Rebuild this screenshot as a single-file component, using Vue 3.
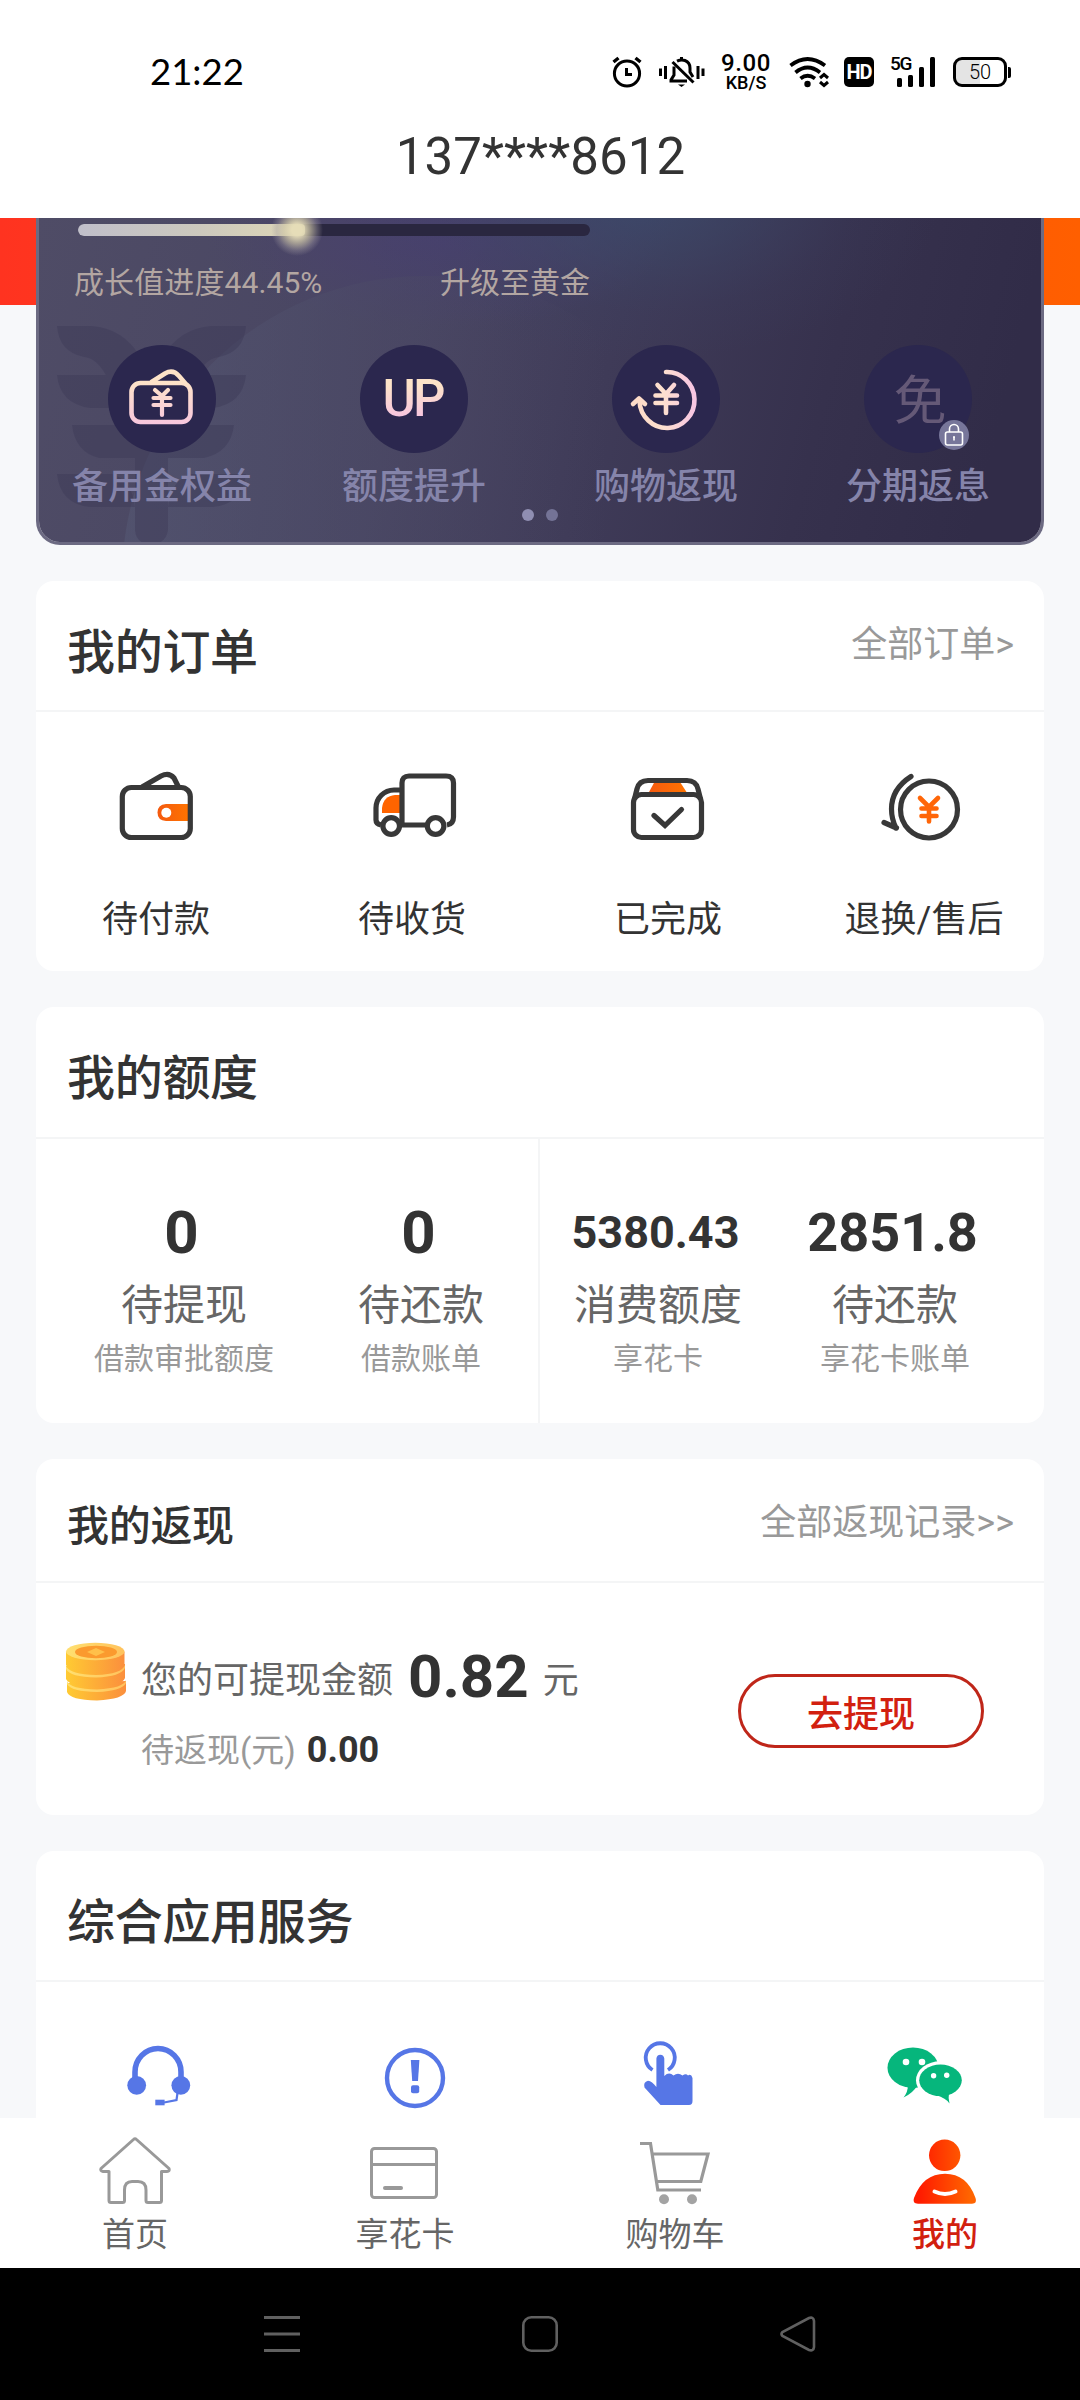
<script setup>
const perks = ['备用金权益', '额度提升', '购物返现', '分期返息']
const orderLabels = ['待付款', '待收货', '已完成', '退换/售后']
const quotas = [
  { value: '0', size: 'lg', label: '待提现', note: '借款审批额度' },
  { value: '0', size: 'lg', label: '待还款', note: '借款账单' },
  { value: '5380.43', size: 'sm', label: '消费额度', note: '享花卡' },
  { value: '2851.8', size: 'md', label: '待还款', note: '享花卡账单' },
]
const tabs = ['首页', '享花卡', '购物车', '我的']
</script>

<template>
  <div class="screen">
    <header class="header">
      <div class="status">
        <span class="clock">21:22</span>
        <div class="status-icons">
          <svg width="30" height="32" viewBox="0 0 30 32" fill="none" stroke="#000" stroke-width="3">
            <circle cx="15" cy="17.5" r="12.6" />
            <path d="M14.5 12V18.5H20" />
            <path d="M1.5 6L6.5 2M28.5 6L23.5 2" stroke-width="3.4" />
          </svg>
          <svg class="bell" width="46" height="32" viewBox="0 0 46 32" fill="none" stroke="#000" stroke-width="3">
            <path d="M1.500 12.500V20M6.500 10V23M39 10V23M44 12.500V20" />
            <path d="M22.500 1V4M15 10.500V19L12 24V25H28M18 5.200Q22 3.200 26 4.500Q31 6.500 31 12V16L34 21" />
            <path d="M13.500 6L34.500 26.500" />
            <path d="M19 28.500H26L22.500 31Z" fill="#000" stroke="none" />
          </svg>
          <div class="speed"><b>9.00</b><i>KB/S</i></div>
          <svg class="wifi" width="40" height="32" viewBox="0 0 40 32" fill="none" stroke="#000" stroke-width="3.800">
            <path d="M1.500 9.500Q18.500 -3.500 36 9.500M6.500 16.500Q18.500 6.500 31 16.500M11.500 22.500Q18.500 17 26 22.500" />
            <circle cx="18.500" cy="28" r="3.200" fill="#000" stroke="none" />
            <path d="M31 22L35 18.500L39 22M31 26L35 29.500L39 26" stroke-width="3" />
          </svg>
          <span class="hd">HD</span>
          <div class="signal">
            <span class="net">5G</span>
            <svg width="44" height="32" viewBox="0 0 44 32" fill="#000">
              <rect x="6" y="22" width="5" height="9" rx="1.500" />
              <rect x="17" y="19" width="5" height="12" rx="1.500" />
              <rect x="28" y="11" width="5" height="20" rx="1.500" />
              <rect x="39" y="1" width="5" height="30" rx="1.500" />
            </svg>
          </div>
          <div class="battery"><span>50</span></div>
        </div>
      </div>
      <h1>137****8612</h1>
    </header>

    <main class="content">
      <section class="hero">
        <div class="vip">
          <svg class="vip-art" viewBox="39 218 1002 324" preserveAspectRatio="none">
            <defs>
              <linearGradient id="vipBase" x1="0" y1="0" x2="1" y2="0.08">
                <stop offset="0" stop-color="#4f4c66" />
                <stop offset="0.4" stop-color="#484562" />
                <stop offset="0.6" stop-color="#3f3b58" />
                <stop offset="0.82" stop-color="#36314d" />
                <stop offset="1" stop-color="#312c48" />
              </linearGradient>
              <radialGradient id="vipBlue" gradientUnits="userSpaceOnUse" cx="0" cy="0" r="1" gradientTransform="translate(640 200) scale(300 160)">
                <stop offset="0" stop-color="#3c4a6c" stop-opacity="0.85" />
                <stop offset="0.35" stop-color="#3c4869" stop-opacity="0.5" />
                <stop offset="0.7" stop-color="#3c4265" stop-opacity="0.16" />
                <stop offset="1" stop-color="#3c4265" stop-opacity="0" />
              </radialGradient>
              <radialGradient id="vipPurple" gradientUnits="userSpaceOnUse" cx="0" cy="0" r="1" gradientTransform="translate(440 235) scale(230 95)">
                <stop offset="0" stop-color="#49406f" stop-opacity="0.9" />
                <stop offset="1" stop-color="#49406f" stop-opacity="0" />
              </radialGradient>
              <linearGradient id="vipDisc" x1="0" y1="0" x2="1" y2="0">
                <stop offset="0" stop-color="#575c78" stop-opacity="0.45" />
                <stop offset="0.45" stop-color="#4c4a66" stop-opacity="0.4" />
                <stop offset="0.8" stop-color="#4c4864" stop-opacity="0" />
              </linearGradient>
            </defs>
            <rect x="36" y="218" width="1008" height="327" fill="url(#vipBase)" />
            <rect x="36" y="218" width="1008" height="327" fill="url(#vipPurple)" />
            <rect x="36" y="218" width="1008" height="327" fill="url(#vipBlue)" />
            <circle cx="425" cy="579" r="303" fill="url(#vipDisc)" />
            <g fill="#3b3856" opacity="0.4">
              <path d="M57 326H92Q122 328 140 356V388H112Q100 358 84 357Q59 352 57 326Z" />
              <path d="M246 326H211Q181 328 163 356V388H191Q203 358 219 357Q244 352 246 326Z" />
              <path d="M57 375H110Q134 380 140 408H90Q60 404 57 375Z" />
              <path d="M246 375H193Q169 380 163 408H213Q243 404 246 375Z" />
              <path d="M72 425H234Q231 452 204 458H99Q75 452 72 425Z" />
              <path d="M57 474H112Q132 480 135 507H90Q60 504 57 474Z" />
              <path d="M246 474H191Q171 480 168 507H213Q243 504 246 474Z" />
              <path d="M135 458H168V530Q166 544 151 544Q136 544 135 530Z" />
            </g>
          </svg>
          <div class="progress">
            <div class="track"><div class="fill" :style="{ width: '44.3%' }"></div></div>
            <span class="glow"></span>
          </div>
          <div class="growth"><span>成长值进度44.45%</span><span>升级至黄金</span></div>
          <div class="perks">
            <div v-for="(p, i) in perks" :key="p" class="perk">
              <div class="disc">
                <svg v-if="i === 0" width="108" height="108" viewBox="0 0 108 108" fill="none" stroke="url(#perkA)" stroke-width="4.600" stroke-linecap="round" stroke-linejoin="round">
                  <defs>
                    <linearGradient id="perkA" gradientUnits="userSpaceOnUse" x1="0" y1="26" x2="0" y2="80">
                      <stop offset="0.2" stop-color="#fde3c8" /><stop offset="1" stop-color="#f7c6de" />
                    </linearGradient>
                  </defs>
                  <rect x="23.500" y="38" width="59" height="39" rx="9" />
                  <path d="M43.500 37L57 28.500Q65 24 71 31L77 38" />
                  <path d="M47 45L54 51L60 45M54 51V70M45.500 53H62.500M45.500 60H62.500" stroke-width="4.200" />
                </svg>
                <span v-else-if="i === 1" class="up">UP</span>
                <svg v-else-if="i === 2" width="108" height="108" viewBox="0 0 108 108" fill="none" stroke="url(#perkC)" stroke-width="4.600" stroke-linecap="round" stroke-linejoin="round">
                  <defs>
                    <linearGradient id="perkC" gradientUnits="userSpaceOnUse" x1="20" y1="0" x2="82" y2="0">
                      <stop offset="0.1" stop-color="#fddcc8" /><stop offset="0.5" stop-color="#fde0cf" /><stop offset="1" stop-color="#f7c6e2" />
                    </linearGradient>
                  </defs>
                  <path d="M54 27A27.500 28 0 1 1 27.500 56" />
                  <path d="M21 59L27 53.500L33 59" />
                  <path d="M45.500 40L54 49L62 40M54 49V68M43.500 50.500H65M43.500 58H65" />
                </svg>
                <template v-else>
                  <span class="waive">免</span>
                  <span class="lock">
                    <svg width="30" height="30" viewBox="0 0 30 30" fill="none" stroke="#fff" stroke-width="1.600">
                      <rect x="6.500" y="12" width="17" height="13" rx="2" />
                      <path d="M10.500 12V9A4.500 4.500 0 0 1 19.500 9V12M15 16.500V20.500M14 17H16" />
                    </svg>
                  </span>
                </template>
              </div>
              <span class="perk-label">{{ p }}</span>
            </div>
          </div>
          <div class="dots"><i></i><i></i></div>
        </div>
      </section>

      <section class="card orders">
        <div class="head"><h2>我的订单</h2><a class="more">全部订单&gt;</a></div>
        <div class="four">
          <div v-for="(o, i) in orderLabels" :key="o" class="order">
            <svg v-if="i === 0" width="76" height="72" viewBox="0 0 76 72" fill="none" stroke="#383838" stroke-width="5.200">
              <defs>
                <linearGradient id="orange"><stop offset="0" stop-color="#f45a10" /><stop offset="1" stop-color="#ff7300" /></linearGradient>
              </defs>
              <path d="M24 17L43 6Q51 2 56 8L60.500 17" />
              <path d="M70 34H48Q39.500 34.500 39.500 42.500T48 51H70Z" fill="url(#orange)" stroke="none" />
              <circle cx="48.300" cy="42.700" r="5" fill="#fff" stroke="none" />
              <rect x="4.300" y="17.500" width="68" height="50" rx="9" />
            </svg>
            <svg v-else-if="i === 1" width="90" height="72" viewBox="-3 0 90 72" fill="none" stroke="#383838" stroke-width="5.200">
              <path d="M12 43V38Q13.500 26 25 25H30V43Z" fill="#ff6400" stroke="none" />
              <path d="M32 20H24A18 18 0 0 0 6 38V50Q6 54 11 55" />
              <path d="M32 55V13Q32 6 39 6H76Q83.500 6 83.500 13V47Q83.500 54 77 55M30 55H58" />
              <circle cx="21.200" cy="56" r="8.300" fill="#fff" />
              <circle cx="65.600" cy="56" r="8.300" fill="#fff" />
            </svg>
            <svg v-else-if="i === 2" width="76" height="72" viewBox="0 0 76 72" fill="none" stroke="#383838" stroke-width="5.200">
              <path d="M24.500 12H50L56.500 22H19Z" fill="url(#orange)" stroke="none" />
              <path d="M4.500 29L7 19Q9 10.500 18 10.500H57Q66 10.500 68 19L70.500 29" />
              <rect x="3.500" y="24.500" width="68" height="43" rx="8" />
              <path d="M24 45.500L35 55.500L51.500 39.500" stroke-linecap="round" />
            </svg>
            <svg v-else width="88" height="72" viewBox="0 0 88 72" fill="none" stroke="#383838" stroke-width="5.200" stroke-linecap="round">
              <circle cx="49" cy="39.500" r="28.500" />
              <path d="M31 6.500Q11.500 19 11.500 39Q11.500 49 16 58M4 52.500L16.500 58" />
              <path d="M40 28L49 37L58 28M49 37V51.500M41.500 38.500H56.500M41.500 46H56.500" stroke="#ff6608" stroke-width="4.600" />
            </svg>
            <span>{{ o }}</span>
          </div>
        </div>
      </section>

      <section class="card quota">
        <div class="head"><h2>我的额度</h2></div>
        <div class="quota-body">
          <div v-for="(q, i) in quotas" :key="i" class="q">
            <b :class="q.size">{{ q.value }}</b>
            <span class="q-label">{{ q.label }}</span>
            <span class="q-note">{{ q.note }}</span>
          </div>
          <i class="divider"></i>
        </div>
      </section>

      <section class="card cashback">
        <div class="head"><h2>我的返现</h2><a class="more">全部返现记录&gt;&gt;</a></div>
        <div class="cash-body">
          <svg class="coins" width="68" height="66" viewBox="0 0 68 66">
            <defs>
              <linearGradient id="coin"><stop offset="0" stop-color="#ffcb33" /><stop offset="1" stop-color="#fb8f3d" /></linearGradient>
              <linearGradient id="rim"><stop offset="0" stop-color="#ffe070" /><stop offset="1" stop-color="#ffc25c" /></linearGradient>
            </defs>
            <path d="M5 45V54Q8 62 35 62.500Q62 61 64 53V43Z" fill="url(#coin)" />
            <path d="M5 43Q8 51 35 51.500Q62 50 64 42V45Q60 53 35 54Q9 53.500 5 46Z" fill="url(#rim)" />
            <path d="M4 28V41Q8 49 34 49.500Q60 48 63 40V26Z" fill="url(#coin)" />
            <path d="M4 28Q8 36.500 34 37Q60 36 63 27V30Q59 38.500 34 39.500Q8 39 4 31Z" fill="url(#rim)" />
            <path d="M4 14V27Q8 35 33 35.500Q59 34.500 62.500 26V14Z" fill="url(#coin)" />
            <ellipse cx="33.300" cy="13.500" rx="29.300" ry="8.700" fill="url(#rim)" />
            <ellipse cx="34" cy="14" rx="21" ry="6.200" fill="#fb9a2e" />
            <path d="M25 14L34 10L43 14L34 18Z" fill="#ffc04a" />
          </svg>
          <div class="cash-text">
            <p class="line1"><span>您的可提现金额</span><b>0.82</b><span>元</span></p>
            <p class="line2"><span>待返现(元)</span><b>0.00</b></p>
          </div>
          <button class="withdraw">去提现</button>
        </div>
      </section>

      <section class="card services">
        <div class="head"><h2>综合应用服务</h2></div>
        <div class="four">
          <svg width="80" height="76" viewBox="0 0 80 76" fill="none" stroke="#5676e6" stroke-width="5.600">
            <path d="M19 44V36A23 23.500 0 0 1 65 36V44" />
            <circle cx="20.700" cy="49.300" r="9.400" fill="#5676e6" stroke="none" />
            <circle cx="64.800" cy="49.300" r="9.400" fill="#5676e6" stroke="none" />
            <path d="M61.500 57L60.500 64L48 66.500" stroke-width="2.200" />
            <rect x="39.300" y="63.700" width="9.300" height="5.600" fill="#5676e6" stroke="none" />
          </svg>
          <svg width="80" height="76" viewBox="0 0 80 76" fill="#5676e6">
            <circle cx="43" cy="42" r="28" fill="none" stroke="#5676e6" stroke-width="4.400" />
            <path d="M38.800 24H47.400L46 45H40.200Z" />
            <rect x="39" y="49.300" width="8.200" height="8" rx="2" />
          </svg>
          <svg width="80" height="76" viewBox="0 0 80 76" fill="#5676e6">
            <path d="M24.500 34A14.500 14.500 0 1 1 40 34" fill="none" stroke="#5676e6" stroke-width="3.800" />
            <path d="M28.400 51V22.500Q28.800 18.700 32.300 18.700T36.300 22.500V40Q41 35.500 45.500 39.500Q50 36 54.500 39.500Q58 37 60 39.500Q63 37 64.500 42V65Q64.500 69 61 69H32.500L16.500 51.500Q15 46 20 44.700Q24 45 28.400 51Z" />
          </svg>
          <svg width="80" height="76" viewBox="0 0 80 76" fill="#06b67c">
            <ellipse cx="29" cy="31.700" rx="25.500" ry="20.200" />
            <path d="M24 49Q24 56 19.500 61.500Q29 57 33 50Z" />
            <ellipse cx="56.500" cy="44.300" rx="24.500" ry="19" fill="#fff" />
            <ellipse cx="56.500" cy="44.300" rx="21.300" ry="15.800" />
            <path d="M52 59Q62 62 65.500 67.500Q64 62 65 57Z" />
            <g fill="#fff">
              <circle cx="22" cy="26" r="3.300" /><circle cx="38" cy="26" r="3.300" />
              <circle cx="49.600" cy="39.700" r="2.700" /><circle cx="62.700" cy="39.300" r="2.700" />
            </g>
          </svg>
        </div>
      </section>
    </main>

    <nav class="tabs">
      <div v-for="(t, i) in tabs" :key="t" class="tab" :class="{ on: i === 3 }">
        <svg v-if="i === 0" width="80" height="76" viewBox="0 0 80 76" fill="none" stroke="#999" stroke-width="3" stroke-linejoin="round">
          <path d="M38.500 6.500Q40 5 41.500 6.500L74 35.500Q75 38.500 72 38.500H66.500V67.500Q66.500 69.500 64.500 69.500H53Q51 69.500 51 67.500V57Q51 48.500 43 48.500H37Q29.500 48.500 29.500 57V67.500Q29.500 69.500 27.500 69.500H16Q14 69.500 14 67.500V38.500H8Q5 38 6 35.500Z" />
        </svg>
        <svg v-else-if="i === 1" width="80" height="76" viewBox="0 0 80 76" fill="none" stroke="#999" stroke-width="3">
          <rect x="6.500" y="15.500" width="65" height="49" rx="3" />
          <path d="M6 31.500H72" />
          <path d="M20 55H36" stroke-width="4" stroke-linecap="round" />
        </svg>
        <svg v-else-if="i === 2" width="80" height="76" viewBox="0 0 80 76" fill="none" stroke="#999" stroke-width="3.200">
          <path d="M5 10.500H15.500L22.800 57H66M18 21H73L65.800 48.500H21.500" />
          <circle cx="29" cy="66.300" r="5" fill="#a3a3a3" stroke="none" />
          <circle cx="57" cy="66.300" r="5" fill="#a3a3a3" stroke="none" />
        </svg>
        <svg v-else width="80" height="76" viewBox="0 0 80 76" fill="url(#me)">
          <defs>
            <linearGradient id="me" gradientUnits="userSpaceOnUse" x1="9" y1="0" x2="71" y2="0">
              <stop offset="0.100" stop-color="#ff1c00" /><stop offset="0.900" stop-color="#ff6400" />
            </linearGradient>
          </defs>
          <circle cx="39.700" cy="22.300" r="15.700" />
          <path d="M13 70.700Q7 70.500 9 65Q18 40.800 40 40.800T70.500 65Q72.500 70.500 67 70.700Z" />
          <path d="M29.500 58.500Q40 63.500 50.500 58.500" fill="none" stroke="#fff" stroke-width="4" stroke-linecap="round" />
        </svg>
        <span>{{ t }}</span>
      </div>
    </nav>

    <footer class="sysnav">
      <svg width="36" height="36" viewBox="0 0 36 36" stroke="#606060" stroke-width="3"><path d="M0 1.500H36M0 18H36M0 34.500H36" /></svg>
      <svg width="36" height="36" viewBox="0 0 36 36" fill="none" stroke="#606060" stroke-width="2.600"><rect x="1.300" y="1.300" width="33.400" height="33.400" rx="8" /></svg>
      <svg width="36" height="36" viewBox="0 0 36 36" fill="none" stroke="#606060" stroke-width="2.600"><path d="M2.500 16Q0.500 18 2.500 20L29 34Q33.500 35.500 34 31V5Q33.500 0.500 29 2Z" /></svg>
    </footer>
  </div>
</template>

<style>
body { margin: 0; background: #f7f8fa; }
</style>

<style scoped>
* { box-sizing: border-box; }
.screen {
  width: 1080px; height: 2400px; overflow: hidden;
  display: flex; flex-direction: column;
  background: #f7f8fa; color: #333;
  font-family: Roboto, "Noto Sans CJK SC", sans-serif;
}
svg { display: block; flex: none; }
h1, h2, p { margin: 0; }
i { font-style: normal; }

.header { height: 218px; flex: none; background: #fff; position: relative; z-index: 2; }
.status { height: 128px; padding: 16px 69px 0 150px; display: flex; align-items: center; justify-content: space-between; color: #000; }
.clock { font: 36.500px/40px Lato, sans-serif; padding-bottom: 2px; }
.status-icons { display: flex; align-items: center; gap: 17px; }
.speed { width: 52px; margin: 0 0 0 -2px; display: flex; flex-direction: column; align-items: center; gap: 1px; }
.speed b { height: 20px; font: 500 24px/22px Roboto, sans-serif; letter-spacing: 0.600px; }
.speed i { height: 19px; font: 500 18px/20px Roboto, sans-serif; }
.wifi { margin-right: -1px; }
.hd { width: 30px; height: 30px; margin-left: -1px; border-radius: 5px; background: #000; color: #fff; font: 700 20px/31px Roboto, sans-serif; text-align: center; letter-spacing: -1px; }
.signal { position: relative; }
.net { position: absolute; left: -1px; top: 0; font: 500 19px/16px Roboto, sans-serif; letter-spacing: -1.200px; }
.battery { position: relative; width: 54px; height: 30px; margin-right: 4px; margin-left: 1px; border: 3px solid #000; border-radius: 9px; background: linear-gradient(90deg, #e4e4e4 50%, #fff 50%); font: 300 20px/25px Roboto, sans-serif; text-align: center; }
.battery::after { content: ""; position: absolute; right: -7px; top: 7px; width: 3px; height: 11px; border-radius: 0 2px 2px 0; background: #000; }
h1 { font-size: 51px; line-height: 60px; font-weight: 400; text-align: center; letter-spacing: 0.100px; padding-left: 1px; margin-top: -1px; }

.content { height: 1900px; flex: none; overflow: hidden; display: flex; flex-direction: column; gap: 36px; }
.header + .content { margin-top: 0; }
.hero { flex: none; height: 327px; padding: 0 36px; background: linear-gradient(90deg, #ff3320, #ff5f00) 0 0 / 100% 87px no-repeat; }
.vip { position: relative; height: 327px; border: 3px solid #6c6a82; border-top: 0; border-radius: 0 0 24px 24px; overflow: hidden; }
.vip-art { position: absolute; inset: 0; width: 100%; height: 100%; }
.progress { position: relative; width: 512px; margin: 6px 0 0 39px; }
.track { height: 12px; border-radius: 6px; background: #2a2740; overflow: hidden; }
.fill { height: 100%; border-radius: 4px; background: linear-gradient(90deg, #c0bfca, #cdc9bd 55%, #dfd7b6); }
.glow { position: absolute; left: 193px; top: -20px; width: 52px; height: 52px; border-radius: 50%; background: radial-gradient(circle closest-side, #e6ddb8 0 20%, #d0c8a9b0 50%, #a39ca060 78%, #a39ca000 100%); }
.growth { position: relative; width: 516px; margin: 25px 0 0 35px; display: flex; justify-content: space-between; font-size: 30px; line-height: 44px; color: #b3a6a2; }
.growth span:first-child { letter-spacing: 0.100px; }
.perks { position: relative; display: flex; margin: 40px -3px 0; }
.perk { width: 252px; display: flex; flex-direction: column; align-items: center; }
.disc { position: relative; width: 108px; height: 108px; border-radius: 50%; background: #2b274e; display: flex; align-items: center; justify-content: center; }
.up { font-size: 51px; font-weight: 500; letter-spacing: -3px; line-height: 56px; background: linear-gradient(#fde3c8 25%, #f7c6de 80%); -webkit-background-clip: text; background-clip: text; color: transparent; padding-right: 3px; }
.waive { font-size: 53px; line-height: 56px; color: #655977; padding: 5px 0 0 4px; }
.lock { position: absolute; right: 3px; bottom: 3px; width: 30px; height: 30px; border-radius: 50%; background: #77769a; }
.perk-label { margin-top: 8px; font-size: 36px; line-height: 52px; font-weight: 500; color: #8584aa; }
.dots { position: absolute; left: 0; right: 0; bottom: 21px; display: flex; justify-content: center; gap: 12px; }
.dots i { width: 12px; height: 12px; border-radius: 50%; background: #8f8eb2; }
.dots i + i { background: #747396; }

.card { flex: none; margin: 0 36px; background: #fff; border-radius: 18px; overflow: hidden; }
.head { flex: none; display: flex; align-items: flex-start; justify-content: space-between; padding: 0 30px 0 31px; height: 131px; border-bottom: 2px solid #f4f5f6; }
.head h2 { font-size: 48px; font-weight: 500; line-height: 60px; margin-top: 42px; letter-spacing: -0.300px; }
.more { font-size: 36px; line-height: 48px; color: #999; margin-top: 40px; }
.four { display: flex; margin: 0 -8px; }
.orders { height: 390px; }
.order { width: 256px; display: flex; flex-direction: column; align-items: center; padding-top: 58px; }
.order span { font-size: 36px; line-height: 48px; margin-top: 54px; }

.quota { height: 416px; }
.quota .head { height: 132px; }
.quota-body { position: relative; display: flex; height: 284px; padding: 58px 30px 0; }
.q { width: 237px; display: flex; flex-direction: column; align-items: center; }
.q b { height: 72px; line-height: 72px; padding-right: 6px; }
.lg { font-size: 60px; }
.md { font-size: 54px; }
.sm { font-size: 45px; }
.q-label { font-size: 42px; line-height: 56px; color: #666; margin-top: 9px; }
.q-note { font-size: 30px; line-height: 40px; color: #999; margin-top: 5px; }
.q-label, .q-note { padding-right: 1px; }
.divider { position: absolute; left: 502px; top: 0; bottom: 0; width: 2px; background: #f4f5f6; }

.cashback { height: 356px; }
.cashback .head { height: 124px; }
.cashback h2 { font-size: 42px; margin-top: 38px; }
.cash-body { display: flex; align-items: flex-start; padding: 55px 60px 0 26px; }
.cash-text { flex: 1; padding-left: 11px; }
.line1 { display: flex; align-items: center; height: 79px; font-size: 36px; line-height: 72px; color: #666; white-space: nowrap; }
.line1 span { padding-top: 6px; }
.line1 b { font-size: 60px; color: #333; margin: 0 14px 0 15px; padding-bottom: 2px; }
.line2 { display: flex; align-items: baseline; font-size: 33px; line-height: 48px; color: #999; margin-top: 9px; }
.line2 b { font-size: 36px; color: #333; margin-left: 11px; }
.withdraw { width: 246px; height: 74px; margin-top: 36px; border: 3px solid #bf2619; border-radius: 37px; background: none; font: 500 36px/66px Roboto, "Noto Sans CJK SC", sans-serif; color: #d2200f; padding: 5px 0 0; }

.services { height: 300px; }
.services .four > svg { margin: 54px 88px 0; }

.tabs { height: 150px; flex: none; background: #fff; display: flex; }
.tab { width: 270px; padding-top: 15px; display: flex; flex-direction: column; align-items: center; }
.tab span { font-size: 33px; line-height: 44px; color: #666; margin-top: 4px; }
.tab.on span { color: #d2200f; font-weight: 500; }
.sysnav { flex: 1; background: #000; display: flex; justify-content: center; gap: 222px; padding-top: 48px; }
</style>
